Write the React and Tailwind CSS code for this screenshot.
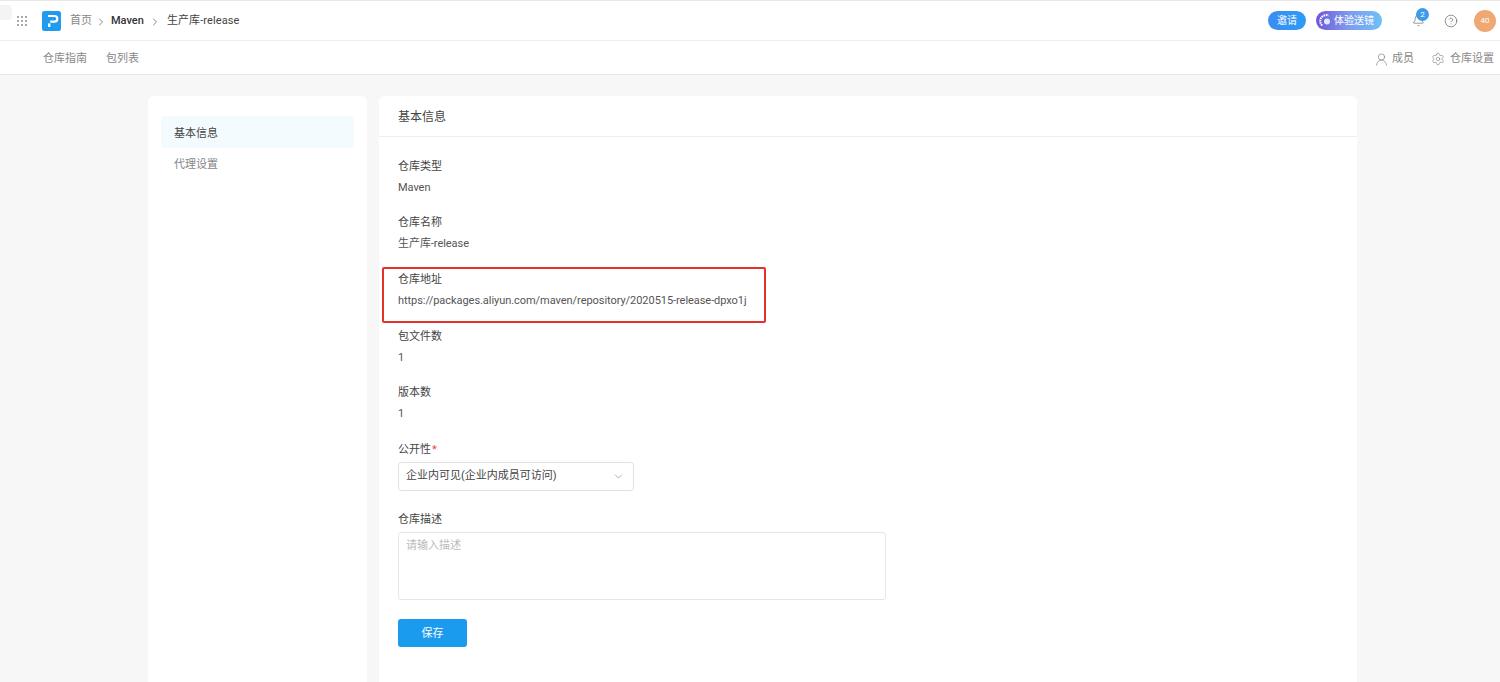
import React from "react";
import { ChevronRight, ChevronDown, Bell, CircleHelp, UserRound, Settings } from "lucide-react";

const fields = [
  { label: "仓库类型", value: "Maven" },
  { label: "仓库名称", value: "生产库-release" },
  { label: "仓库地址", value: "https://packages.aliyun.com/maven/repository/2020515-release-dpxo1j" },
  { label: "包文件数", value: "1" },
  { label: "版本数", value: "1" },
];

const GridIcon = () => (
  <svg width="12" height="12" viewBox="0 0 12 12" fill="#a8a8a8">
    {[1, 5, 9].map((y) =>
      [1, 5, 9].map((x) => <rect key={`${x}-${y}`} x={x} y={y} width="2" height="2" />)
    )}
  </svg>
);

const Logo = () => (
  <svg width="19" height="20" viewBox="0 0 19 20">
    <rect width="19" height="20" rx="2.5" fill="#1f9bf0" />
    <path d="M6 5h6.5a2.8 2.8 0 0 1 0 5.6H8.2" fill="none" stroke="#fff" strokeWidth="2.2" />
    <path d="M7.2 12.4v3.6" fill="none" stroke="#fff" strokeWidth="2.4" />
  </svg>
);

const TrialIcon = () => (
  <svg width="14" height="14" viewBox="0 0 14 14" fill="none">
    <path d="M3.2 11.5A6 6 0 0 1 9.5 1.5" stroke="#fff" strokeWidth="2" strokeDasharray="1.6 0.7" />
    <circle cx="8" cy="7.5" r="3" fill="#d8ecff" />
  </svg>
);

const Field = ({ label, value }) => (
  <div className="mb-[13.67px] text-[11px] leading-[22px]">
    <div className="text-[#444]">{label}</div>
    <div className="-mt-[1px] tracking-[-0.05px] text-[#555]">{value}</div>
  </div>
);

export default function App() {
  return (
    <div
      className="relative h-[682px] overflow-hidden bg-[#f7f7f7]"
      style={{ fontFamily: 'Roboto, "Noto Sans CJK SC", sans-serif' }}
    >
      <header className="flex h-[41px] items-center border-t border-b border-t-[#e8e8e8] border-b-[#efefef] bg-white pr-[4px] pl-[16px]">
        <GridIcon />
        <div className="ml-[14px]"><Logo /></div>
        <nav className="ml-[9px] flex items-center pt-[2px] text-[11px]">
          <span className="text-[#888]">首页</span>
          <ChevronRight size={12} strokeWidth={1.4} className="ml-[3px] text-[#555]" />
          <span className="ml-[4px] font-medium text-[#333]">Maven</span>
          <ChevronRight size={12} strokeWidth={1.4} className="mr-[6px] ml-[5px] text-[#555]" />
          <span className="tracking-[0.1px] text-[#444]">生产库-release</span>
        </nav>
        <div className="ml-auto flex items-center">
          <span className="flex h-[19px] w-[38px] items-center justify-center rounded-full bg-gradient-to-r from-[#3b8cf2] to-[#2a9cf5] text-[10px] text-white">
            邀请
          </span>
          <span className="ml-[10px] flex h-[19px] w-[66px] items-center gap-[1px] rounded-full bg-gradient-to-r from-[#6f55d8] via-[#7d9cf0] to-[#6cc0f7] pl-[3px] text-[10px] text-white">
            <TrialIcon />
            体验送镜
          </span>
          <span className="relative ml-[30px] flex">
            <Bell size={13} strokeWidth={1.2} className="text-[#666]" />
            <span className="absolute -top-[6px] left-[4px] flex h-[13px] w-[13px] items-center justify-center rounded-full bg-[#3d9be9] text-[8px] text-white">
              2
            </span>
          </span>
          <CircleHelp size={14} strokeWidth={1.2} className="ml-[19px] text-[#666]" />
          <span className="ml-[16px] flex h-[22px] w-[22px] items-center justify-center rounded-full bg-[#f0a872] text-[8px] text-white">
            40
          </span>
        </div>
      </header>

      <div className="flex h-[34px] items-center border-b border-[#e8e8e8] bg-white pt-[3px] pr-[6px] pl-[43px] text-[11px] text-[#888]">
        <span>仓库指南</span>
        <span className="ml-[19px]">包列表</span>
        <span className="ml-auto flex items-center gap-[3px]">
          <UserRound size={15} strokeWidth={1} className="text-[#777]" />
          成员
        </span>
        <span className="ml-[17px] flex items-center gap-[5px]">
          <Settings size={14} strokeWidth={1} className="text-[#777]" />
          仓库设置
        </span>
      </div>

      <main className="flex gap-[12px] pt-[21px] pl-[148px]">
        <aside className="h-[600px] w-[219px] rounded-t-md bg-white px-[13px] pt-[20px] text-[11px]">
          <div className="flex h-[32px] items-center rounded-sm bg-[#f4fbfe] pt-[4px] pl-[13px] text-[#444]">基本信息</div>
          <div className="flex h-[32px] items-center pt-[3px] pl-[13px] text-[#888]">代理设置</div>
        </aside>

        <section className="h-[600px] w-[978px] rounded-t-md bg-white">
          <h1 className="flex h-[41px] items-center border-b border-[#eeeeee] pt-[2px] pl-[19px] text-[12px] font-normal text-[#444]">
            基本信息
          </h1>
          <div className="pt-[18.7px] pl-[19px]">
            {fields.map((f) => (
              <Field key={f.label} label={f.label} value={f.value} />
            ))}
            <div className="mt-[0.3px] text-[11px] leading-[22px] text-[#444]">
              公开性<span className="ml-[1px] text-[#e5484d]">*</span>
            </div>
            <div className="mt-[1px] flex h-[29px] w-[236px] items-center justify-between rounded-[3px] border border-[#e2e2e2] pr-[8px] pl-[7px] text-[11px] text-[#444]">
              企业内可见(企业内成员可访问)
              <ChevronDown size={13} strokeWidth={1.2} className="text-[#888]" />
            </div>
            <div className="mt-[18px] text-[11px] leading-[22px] text-[#444]">仓库描述</div>
            <div className="mt-[1px] h-[68px] w-[488px] rounded-[3px] border border-[#e6e6e6] px-[7px] pt-[3px] text-[11px] leading-[20px] text-[#bbb]">
              请输入描述
            </div>
            <button className="mt-[19px] flex h-[28px] w-[69px] items-center justify-center rounded-[3px] bg-[#1b9bee] pt-[2px] text-[11px] text-white">
              保存
            </button>
          </div>
        </section>
      </main>

      {/* annotation box drawn over the repo address field */}
      <div className="absolute top-[267px] left-[382px] h-[56px] w-[384px] rounded-[2px] border-2 border-[#e5302a]" />
      <div className="absolute top-[5px] left-0 h-[15px] w-[12px] rounded-r-sm bg-[#f4f4f4]" />
    </div>
  );
}
